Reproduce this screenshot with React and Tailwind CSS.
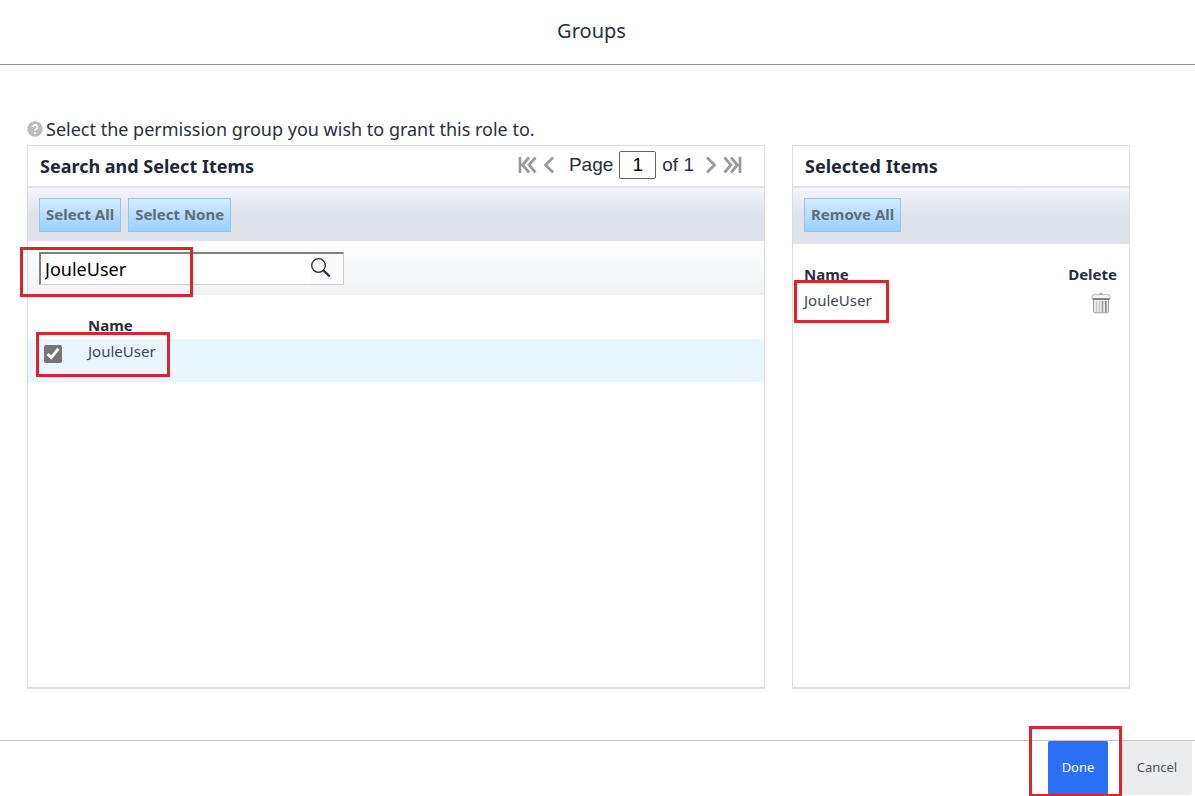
import React, { useState } from "react";

function Highlight({ className }) {
  return (
    <span
      aria-hidden="true"
      className={"pointer-events-none absolute border-3 border-[#da252c] " + className}
    />
  );
}

function ToolButton({ children }) {
  return (
    <button
      type="button"
      className="h-[34px] border border-[#93c6e8] bg-linear-to-b from-[#d5ecff] to-[#97cefd] px-[6px] text-[15px] font-bold whitespace-nowrap text-[#5f6b75]"
    >
      {children}
    </button>
  );
}

function PagerButton({ label, children, width }) {
  return (
    <button type="button" aria-label={label} className="flex h-5 items-center text-[#9a9a9a]">
      <svg
        width={width}
        height="18"
        viewBox={`0 0 ${width} 18`}
        fill="none"
        stroke="currentColor"
        strokeWidth="2.7"
      >
        {children}
      </svg>
    </button>
  );
}

function HelpIcon() {
  return (
    <svg width="16" height="16" viewBox="0 0 16 16" aria-hidden="true">
      <circle cx="8" cy="8" r="7.8" fill="#bdbdbd" />
      <path
        d="M5.6 6.2a2.4 2.2 0 1 1 3.6 1.9c-.8.5-1.2.8-1.2 1.7"
        fill="none"
        stroke="#fff"
        strokeWidth="1.7"
      />
      <circle cx="8" cy="12" r="1.1" fill="#fff" />
    </svg>
  );
}

function TrashIcon() {
  return (
    <svg width="20" height="22" viewBox="0 0 20 22" aria-hidden="true">
      <path d="M2.500 7.500h15v11.500q0 1.800-1.800 1.800H4.300q-1.800 0-1.800-1.800z" fill="#ededed" stroke="#9a9a9a" />
      <path d="M5.500 9v11M8.500 9v11" stroke="#c4c4c4" strokeWidth="1.300" />
      <path d="M11.500 9v11" stroke="#999" strokeWidth="1.600" />
      <path d="M14.800 9v11" stroke="#858585" strokeWidth="1.600" />
      <path d="M8 2.500q0-1.700 2-1.700t2 1.700z" fill="#aaa" />
      <path d="M3 2.700h14q2 0 2 2V7H1V4.700q0-2 2-2z" fill="#f6f6f6" stroke="#b5b5b5" />
      <path d="M1.500 7h17" stroke="#777" strokeWidth="1.600" />
    </svg>
  );
}

export default function App() {
  const [query, setQuery] = useState("JouleUser");
  const [page, setPage] = useState("1");
  const [checked, setChecked] = useState(true);

  return (
    <div className="flex h-screen flex-col overflow-hidden bg-white font-['Noto_Sans',sans-serif] text-[#28303e]">
      <header className="flex h-[65px] shrink-0 items-center justify-center border-b border-[#8f8f8f] pr-3 pb-[2px]">
        <h1 className="text-[20px]">Groups</h1>
      </header>

      <main className="flex min-h-0 flex-1 flex-col pt-12 pr-[65px] pb-[51px] pl-[27px]">
        <p className="flex h-8 shrink-0 items-center gap-[3px] text-[18px] whitespace-nowrap">
          <HelpIcon />
          Select the permission group you wish to grant this role to.
        </p>

        <div className="grid min-h-0 flex-1 grid-cols-[738fr_338fr] gap-[27px]">
          <section className="flex flex-col border border-b-2 border-[#dddddd]">
            <div className="flex h-[42px] items-center justify-between border-b-2 border-[#e0e2e5] pr-[22px] pl-3">
              <h2 className="text-[18px] font-bold text-[#1f2736]">Search and Select Items</h2>
              <div className="flex items-center gap-[6px] pb-[2px] font-['Liberation_Sans',sans-serif] text-[19px]">
                <PagerButton label="First page" width="19">
                  <path d="M2 1v16M11 1.500 4.500 9l6.500 7.500M17.500 1.500 11 9l6.500 7.500" />
                </PagerButton>
                <PagerButton label="Previous page" width="12">
                  <path d="M10 1.500 2.500 9l7.500 7.500" />
                </PagerButton>
                <label htmlFor="page" className="ml-2">
                  Page
                </label>
                <input
                  id="page"
                  value={page}
                  onChange={(e) => setPage(e.target.value)}
                  className="h-7 w-[37px] rounded-xs border border-[#666666] bg-white text-center text-black"
                />
                <span>of 1</span>
                <PagerButton label="Next page" width="17">
                  <path d="M7 1.500 14.500 9 7 16.500" />
                </PagerButton>
                <PagerButton label="Last page" width="19">
                  <path d="M1.500 1.500 8 9l-6.500 7.500M8 1.500 14.500 9 8 16.500M17 1v16" />
                </PagerButton>
              </div>
            </div>
            <div className="flex h-[53px] items-center gap-[7px] bg-linear-to-b from-[#f3f6fa] to-[#dee2ea] to-50% px-[11px]">
              <ToolButton>Select All</ToolButton>
              <ToolButton>Select None</ToolButton>
            </div>
            <div className="flex h-[54px] items-center bg-linear-to-b from-white to-[#f0f2f5] px-[11px]">
              <div className="relative flex h-[33px] w-[305px] border border-t-2 border-l-2 border-[#cccccc] border-t-[#808080] border-l-[#808080] bg-white">
                <input
                  type="text"
                  aria-label="Search groups"
                  value={query}
                  onChange={(e) => setQuery(e.target.value)}
                  className="min-w-0 flex-1 px-1 pt-[2px] text-[18px] text-black outline-none"
                />
                <button
                  type="button"
                  aria-label="Search"
                  className="flex w-8 items-center bg-[#fafafb] pb-[2px]"
                >
                  <svg width="20" height="20" viewBox="0 0 20 20" fill="none" stroke="#28303e">
                    <circle cx="7.500" cy="7.500" r="6.800" strokeWidth="1.300" />
                    <path d="m12.500 12.500 6.300 6" strokeWidth="2.400" />
                  </svg>
                </button>
                <Highlight className="-top-[7px] -left-[21px] h-[50px] w-[173px]" />
              </div>
            </div>
            <table className="mt-5 w-full text-left text-[15px] leading-5">
              <thead>
                <tr className="h-6 align-top">
                  <th aria-label="Selected" className="w-[60px]"></th>
                  <th className="font-bold">Name</th>
                </tr>
              </thead>
              <tbody>
                <tr className="h-[43px] bg-[#e9f6fe]">
                  <td className="relative pl-4 align-top">
                    <input
                      id="row-joule"
                      type="checkbox"
                      checked={checked}
                      onChange={(e) => setChecked(e.target.checked)}
                      className="mt-[6px] block size-[18px] accent-[#757575]"
                    />
                    <Highlight className="-top-[7px] left-2 h-[45px] w-[134px]" />
                  </td>
                  <td className="pt-[2px] align-top text-[#3c4656]">
                    <label htmlFor="row-joule">JouleUser</label>
                  </td>
                </tr>
              </tbody>
            </table>
          </section>

          <section className="flex flex-col border border-b-2 border-[#dddddd]">
            <div className="flex h-[42px] items-center border-b-2 border-[#e0e2e5] pl-3">
              <h2 className="text-[18px] font-bold text-[#1f2736]">Selected Items</h2>
            </div>
            <div className="flex h-14 items-center bg-linear-to-b from-[#f3f6fa] to-[#dee2ea] to-50% px-[11px] pb-[3px]">
              <ToolButton>Remove All</ToolButton>
            </div>
            <table className="mt-5 w-full text-left text-[15px] leading-5">
              <thead>
                <tr className="h-5">
                  <th className="pl-[11px] font-bold">Name</th>
                  <th className="pr-3 text-right font-bold">Delete</th>
                </tr>
              </thead>
              <tbody>
                <tr className="h-[38px]">
                  <td className="relative pt-[6px] pl-[11px] align-top text-[#3c4656]">
                    JouleUser
                    <Highlight className="-top-[4px] left-px h-[43px] w-[95px]" />
                  </td>
                  <td className="pt-2 pr-[18px] align-top">
                    <button type="button" aria-label="Delete JouleUser" className="ml-auto block">
                      <TrashIcon />
                    </button>
                  </td>
                </tr>
              </tbody>
            </table>
          </section>
        </div>
      </main>

      <footer className="flex h-14 shrink-0 justify-end gap-[14px] border-t border-[#c6c6c6] pr-[3px] pb-px text-[13px]">
        <div className="relative flex">
          <button type="button" className="w-[60px] rounded-xs bg-[#2970f6] text-white">
            Done
          </button>
          <Highlight className="-top-[15px] -left-[19px] z-10 h-[71px] w-[93px]" />
        </div>
        <button type="button" className="w-[70px] rounded-xs bg-[#ebecee] text-[#4a5260]">
          Cancel
        </button>
      </footer>
    </div>
  );
}
